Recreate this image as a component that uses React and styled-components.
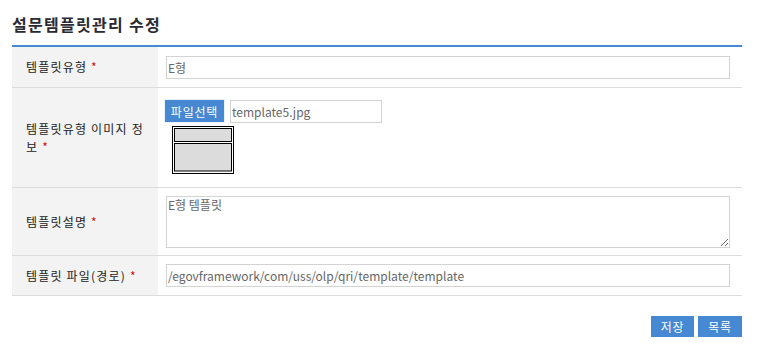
import React from "react";
import styled, { createGlobalStyle } from "styled-components";

const Global = createGlobalStyle`
  html, body { margin: 0; padding: 0; background: #fff; }
  body { font-family: "Noto Sans CJK KR", "Noto Sans", sans-serif; color: #333; }
  * { box-sizing: border-box; }
`;

const Page = styled.div`
  width: 760px;
  padding: 12px 18px 0 12px;
`;

const Title = styled.h2`
  margin: 0;
  height: 33px;
  font-size: 16px;
  line-height: 24px;
  font-weight: 700;
  color: #2a2a33;
  letter-spacing: 1.3px;
`;

const Table = styled.div`
  border-top: 2px solid #4688d2;
`;

const Row = styled.div`
  display: grid;
  grid-template-columns: 146px 1fr;
  border-bottom: 1px solid #dcdcdc;
  min-height: ${(p) => p.$h}px;
`;

const Th = styled.div`
  background: #f3f3f3;
  padding: 0 8px 0 14px;
  display: flex;
  align-items: center;
`;

const Label = styled.p`
  margin: 0;
  font-size: 12px;
  line-height: 18px;
  color: #222;
  letter-spacing: 1.2px;
  &::after {
    content: " *";
    color: #d0100c;
  }
`;

const Td = styled.div`
  padding: ${(p) => p.$pad || "0 12px 0 8px"};
  display: flex;
  flex-direction: ${(p) => (p.$col ? "column" : "row")};
  align-items: ${(p) => (p.$col ? "flex-start" : "center")};
`;

const TextInput = styled.input`
  width: 564px;
  height: 23px;
  border: 1px solid #d3d3d3;
  padding: 0 1px;
  font-family: "Noto Sans CJK KR", "Noto Sans", sans-serif;
  font-size: 12px;
  color: #666;
  outline: none;
  background: #fff;
`;

const TextArea = styled.textarea`
  width: 564px;
  height: 52px;
  border: 1px solid #d3d3d3;
  padding: 0 1px;
  font-family: "Noto Sans CJK KR", "Noto Sans", sans-serif;
  font-size: 12px;
  line-height: 16px;
  color: #666;
  outline: none;
  resize: both;
  display: block;
`;

const FileLine = styled.div`
  display: flex;
  align-items: center;
  gap: 5px;
`;

const BlueButton = styled.button`
  width: ${(p) => p.$w}px;
  height: ${(p) => p.$hgt}px;
  background: #4688d2;
  border: 1px solid ${(p) => (p.$light ? "#e8f0fa" : "#4688d2")};
  color: #fff;
  font-family: "Noto Sans CJK KR", "Noto Sans", sans-serif;
  font-size: 12px;
  padding: 0;
  cursor: pointer;
  letter-spacing: 0.8px;
`;

const FileName = styled.div`
  width: 152px;
  height: 23px;
  border: 1px solid #d3d3d3;
  font-size: 12px;
  line-height: 21px;
  padding: 0 1px;
  color: #666;
`;

const Thumb = styled.svg`
  display: block;
  margin: 3px 0 0 8px;
`;

const Footer = styled.div`
  display: flex;
  justify-content: flex-end;
  gap: 4px;
  padding-top: 20px;
`;

export default function App() {
  return (
    <Page>
      <Global />
      <Title>설문템플릿관리 수정</Title>
      <Table>
        <Row $h={41}>
          <Th>
            <Label>템플릿유형</Label>
          </Th>
          <Td>
            <TextInput defaultValue="E형" />
          </Td>
        </Row>
        <Row $h={100}>
          <Th>
            <Label>템플릿유형 이미지 정보</Label>
          </Th>
          <Td $col $pad="11px 12px 0 6px">
            <FileLine>
              <BlueButton $w={61} $hgt={24} $light>파일선택</BlueButton>
              <FileName>template5.jpg</FileName>
            </FileLine>
            <Thumb width="62" height="48" viewBox="0 0 62 48">
              <rect x="0.5" y="0.5" width="61" height="47" fill="#fff" stroke="#000" />
              <rect x="2.5" y="2.5" width="57" height="13" fill="#dcdcdc" stroke="#000" />
              <rect x="2.5" y="17.5" width="57" height="27.5" fill="#dcdcdc" stroke="#000" />
            </Thumb>
          </Td>
        </Row>
        <Row $h={68}>
          <Th>
            <Label>템플릿설명</Label>
          </Th>
          <Td>
            <TextArea defaultValue="E형 템플릿" />
          </Td>
        </Row>
        <Row $h={40}>
          <Th>
            <Label>템플릿 파일(경로)</Label>
          </Th>
          <Td>
            <TextInput defaultValue="/egovframework/com/uss/olp/qri/template/template" />
          </Td>
        </Row>
      </Table>
      <Footer>
        <BlueButton $w={43} $hgt={21}>저장</BlueButton>
        <BlueButton $w={44} $hgt={21}>목록</BlueButton>
      </Footer>
    </Page>
  );
}
